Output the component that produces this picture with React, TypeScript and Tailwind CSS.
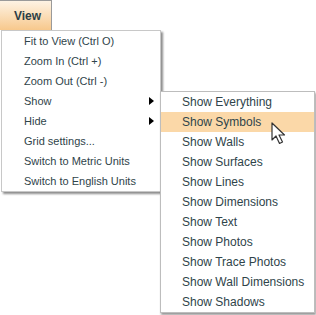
import React from 'react'

const mainItems = [
  { label: 'Fit to View (Ctrl O)' },
  { label: 'Zoom In (Ctrl +)' },
  { label: 'Zoom Out (Ctrl -)' },
  { label: 'Show', sub: true },
  { label: 'Hide', sub: true },
  { label: 'Grid settings...' },
  { label: 'Switch to Metric Units' },
  { label: 'Switch to English Units' },
]

const showItems = [
  'Show Everything',
  'Show Symbols',
  'Show Walls',
  'Show Surfaces',
  'Show Lines',
  'Show Dimensions',
  'Show Text',
  'Show Photos',
  'Show Trace Photos',
  'Show Wall Dimensions',
  'Show Shadows',
]

function Cursor() {
  return (
    <svg width="18" height="24" viewBox="0 0 18 24" className="absolute left-[271px] top-[122px]">
      <path d="M1 1 L1 18 L5 14 L8.5 21.5 L11.5 20 L8 13 L13.5 13 Z" fill="#fff" stroke="#333" strokeWidth="1.2" strokeLinejoin="round" />
    </svg>
  )
}

export default function App() {
  return (
    <div className="relative w-[316px] h-[315px] bg-white overflow-hidden text-[#2f444a]" style={{ fontFamily: '"Liberation Sans", Arial, sans-serif' }}>
      {/* menubar button */}
      <div className="w-[52px] h-[30px] flex items-center pl-[14px] font-bold text-[12px] text-[#2c3e46] border-t border-r border-[#9a9a9a] bg-gradient-to-b from-[#fdf3e4] to-[#f7c88c]">
        View
      </div>

      {/* main menu */}
      <div className="absolute left-[1px] top-[30px] w-[160px] bg-white border border-[#c8c8c8] text-[11px] shadow-[2px_2px_2px_rgba(0,0,0,0.45)]">
        {mainItems.map((it) => (
          <div key={it.label} className="h-[20px] flex items-center pl-[22px] pr-[6px] justify-between">
            <span>{it.label}</span>
            {it.sub && (
              <svg width="5" height="8" viewBox="0 0 5 8">
                <path d="M0 0 L5 4 L0 8 Z" fill="#000" />
              </svg>
            )}
          </div>
        ))}
      </div>

      {/* submenu */}
      <div className="absolute left-[160px] top-[91px] w-[155px] bg-white border border-[#bdbdbd] text-[12px] shadow-[1px_2px_2px_rgba(0,0,0,0.4)]">
        {showItems.map((s, i) => (
          <div key={s} className={`h-[20px] flex items-center pl-[21px] ${i === 1 ? 'bg-[#fbd8a8]' : ''}`}>
            {s}
          </div>
        ))}
      </div>

      <Cursor />
    </div>
  )
}
